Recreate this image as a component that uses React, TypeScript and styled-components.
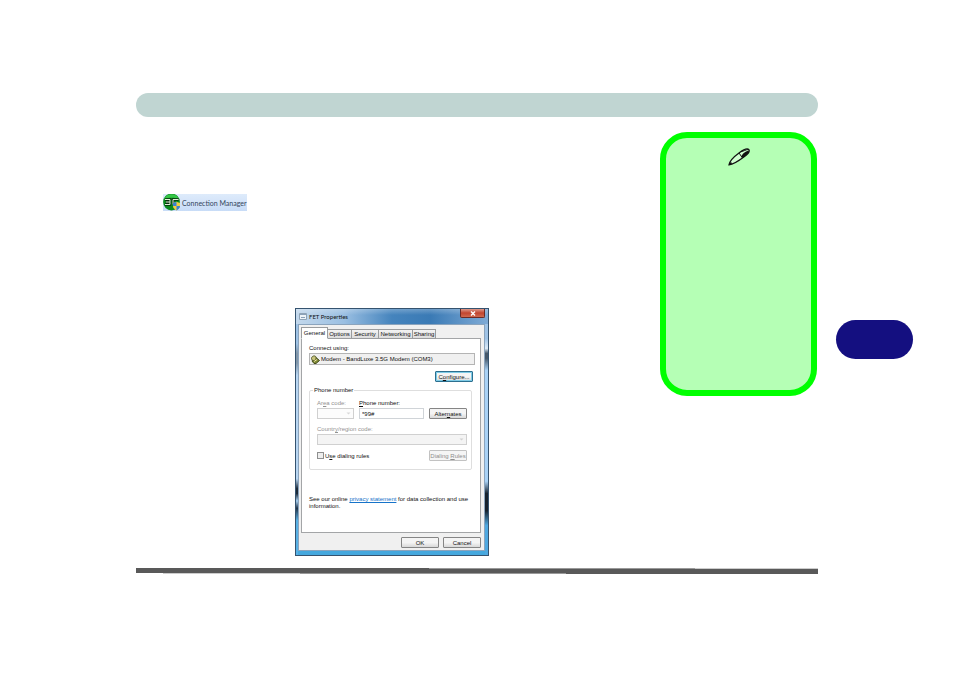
import React from "react";
import styled, { createGlobalStyle, css } from "styled-components";

const Global = createGlobalStyle`
  *, *::before, *::after { box-sizing: border-box; }
  body { margin: 0; background: #fff; font-family: "Liberation Sans", Arial, sans-serif; }
  button, input, select { font: inherit; color: inherit; margin: 0; }
  svg { flex-shrink: 0; }
`;

const Page = styled.div`
  display: grid;
  grid-template-columns: minmax(0, 1fr) 77px;
  column-gap: 18px;
  padding: 93px 41px 0 136px;
`;

const Sheet = styled.main`
  display: flex;
  flex-direction: column;
`;

const HeaderBar = styled.header`
  height: 24px;
  border-radius: 12px;
  background: #c0d5d2;
`;

const Columns = styled.div`
  display: grid;
  grid-template-columns: minmax(0, 1fr) 157px;
  column-gap: 12px;
  align-items: start;
  padding: 15px 1px 0 0;
`;

const Article = styled.section`
  display: flex;
  flex-direction: column;
  padding-top: 62px;
`;

const Shortcut = styled.div`
  display: flex;
  align-items: center;
  gap: 2px;
  align-self: flex-start;
  width: 84px;
  height: 17px;
  margin-left: 27px;
  color: #34455c;
  background: linear-gradient(#deebfb, #c8dcf7);
  font-family: Lato, "Liberation Sans", sans-serif;
  font-size: 7px;
  line-height: 16px;
  white-space: nowrap;
`;

const Note = styled.aside`
  display: flex;
  justify-content: center;
  min-height: 264px;
  padding-top: 10px;
  border: 6px solid #00ff00;
  border-radius: 27px;
  background: #b5ffb5;
`;

const ChapterTab = styled.nav`
  height: 39px;
  margin-top: 227px;
  border-radius: 20px;
  background: #140f80;
`;

const FooterRule = styled.footer`
  height: 6px;
  margin-top: 12px;
  background:
    linear-gradient(90deg, #595959 43%, #999 43% 82%, #ccc 82%) top / 100% 1px no-repeat,
    linear-gradient(90deg, #fff 4%, #ccc 4% 24%, #999 24% 63%, #595959 63%) bottom / 100% 1px no-repeat,
    #595959;
`;

const Dialog = styled.section`
  align-self: center;
  width: 194px;
  margin-top: 97px;
  padding: 0 3px 4px 2px;
  border: 1px solid #35536f;
  color: #111;
  background:
    linear-gradient(#9fc3e6 14%, #8296a8 18% 22%, #b8d6f2 27% 69%, #1d2a38 73% 75%, #a5cdee 78%, #223448 81%, #57b0e4 86%) left / 2px 100% no-repeat,
    linear-gradient(#9fc3e6 12%, #dceaf7 16%, #46586a 18% 20%, #a9d2f6 25% 70%, #17222e 75% 82%, #4fa8e0 88%) right / 3px 100% no-repeat,
    #45a8de;
  font-size: 6px;
  line-height: 8px;
  white-space: nowrap;
`;

const TitleBar = styled.header`
  display: flex;
  align-items: flex-start;
  height: 15px;
  margin: 0 -3px 0 -2px;
  padding: 0 3px 0 2px;
  background:
    linear-gradient(rgba(255, 255, 255, 0.25), rgba(255, 255, 255, 0) 40%),
    linear-gradient(90deg, #c3d8ec, #9abfe2 25%, #4584bd 50%, #3a7ab5 70%, #7fabd6);
`;

const Title = styled.h1`
  flex: 1;
  margin: 0 0 0 2px;
  font-family: Lato, "Liberation Sans", sans-serif;
  font-size: 6px;
  font-weight: 400;
  line-height: 15px;
`;

const CloseButton = styled.button`
  display: flex;
  align-items: center;
  justify-content: center;
  width: 25px;
  height: 9px;
  padding: 0;
  border: 1px solid #6b2a25;
  border-top: 0;
  border-radius: 0 0 2px 2px;
  background: linear-gradient(#dc9a8c, #c2452f 50%, #cf6a50);
`;

const Client = styled.div`
  padding: 2px 3px 2px 2px;
  border: 1px solid #8ba4bd;
  background: #f0f0f0;
`;

const Tabs = styled.div`
  display: flex;
  align-items: flex-end;
  height: 12px;
  margin-bottom: -1px;
`;

const Tab = styled.button<{ $active?: boolean; $width: number }>`
  width: ${(p) => p.$width}px;
  height: ${(p) => (p.$active ? 12 : 10)}px;
  padding: 0;
  border: 1px solid #9a9c9e;
  border-bottom-color: ${(p) => (p.$active ? "#fff" : "#9a9c9e")};
  border-left-width: ${(p) => (p.$active ? 1 : 0)}px;
  background: ${(p) => (p.$active ? "#fff" : "linear-gradient(#f3f3f3, #dcdcdc)")};
  line-height: 8px;
`;

const Panel = styled.div`
  display: flex;
  flex-direction: column;
  min-height: 195px;
  padding: 5px 5px 0 7px;
  border: 1px solid #a3a5a7;
  background: #fff;
`;

const Device = styled.div`
  display: flex;
  align-items: center;
  gap: 1px;
  height: 12px;
  margin-top: 1px;
  border: 1px solid #b4b4b4;
  background: #f0f0f0;
`;

const Button = styled.button<{ $focus?: boolean }>`
  width: 38px;
  height: 11px;
  padding: 0;
  border: 1px solid #858585;
  border-radius: 1px;
  background: linear-gradient(#f4f4f4 50%, #d8d8d8);
  line-height: 8px;
  ${(p) =>
    p.$focus &&
    css`
      border-color: #2c6f8f;
      box-shadow: inset 0 0 0 1px #7fcbe6;
    `}
  &:disabled {
    border-color: #c2c2c2;
    background: #f5f5f5;
    color: #8e8e8e;
  }
`;

const DialogActions = styled.div`
  display: flex;
  justify-content: flex-end;
  gap: 4px;
  margin-top: 4px;
`;

const DeviceActions = styled.div`
  display: flex;
  justify-content: flex-end;
  margin: 6px 2px 0 0;
`;

const Group = styled.fieldset`
  display: grid;
  grid-template-columns: 37px minmax(0, 1fr) 38px;
  column-gap: 5px;
  align-items: end;
  min-width: 0;
  margin: 4px 3px 0 0;
  padding: 5px 4px 8px 7px;
  border: 1px solid #dedede;
  border-radius: 2px;
`;

const Legend = styled.legend`
  margin-left: -4px;
  padding: 0 1px;
`;

const Field = styled.label<{ $wide?: boolean; $muted?: boolean }>`
  display: flex;
  flex-direction: column;
  gap: 1px;
  color: ${(p) => (p.$muted ? "#929292" : "inherit")};
  ${(p) => p.$wide && "grid-column: 1 / -1; margin-top: 6px;"}
`;

const TextInput = styled.input`
  width: 100%;
  height: 11px;
  padding: 0 2px;
  border: 1px solid #d0d4d8;
  background: #fff;
`;

const SelectShell = styled.span`
  display: grid;
  align-items: center;
  & > * { grid-area: 1 / 1; }
  & > svg { justify-self: end; margin-right: 3px; }
`;

const Select = styled.select<{ $plain?: boolean }>`
  width: 100%;
  height: 11px;
  padding: 0 2px;
  border: 1px solid #bdbdbd;
  border-radius: 0;
  background: ${(p) => (p.$plain ? "#fbfbfb" : "#f0f0f0")};
  appearance: none;
`;

const RulesRow = styled.div`
  display: flex;
  grid-column: 1 / -1;
  align-items: center;
  justify-content: space-between;
  margin-top: 5px;
`;

const CheckLabel = styled.label`
  display: flex;
  align-items: center;
  gap: 1px;
`;

const Check = styled.input`
  width: 7px;
  height: 7px;
  border: 1px solid #8e8f8f;
  background: #eee;
  appearance: none;
`;

const Privacy = styled.p`
  margin: 26px 0 0;
  line-height: 7px;
  white-space: normal;
`;

const Link = styled.a`
  color: #1673c9;
`;

const Arrow = () => (
  <svg width="5" height="3" viewBox="0 0 5 3" aria-hidden="true">
    <path d="M.5 .5h4L2.500 2.500z" fill="#888" />
  </svg>
);

const ManagerIcon = () => (
  <svg width="17" height="17" viewBox="0 0 17 17" aria-hidden="true">
    <circle cx="8.500" cy="8" r="8.400" fill="#0a8a1c" />
    <path d="M1 5.500a8 8 0 0 1 15 0c-3-2.500-12-2.500-15 0z" fill="#35c546" />
    <path d="M2 5.500h5v5H2M3 8h4M15.500 5.500H10v5" fill="none" stroke="#072d0b" strokeWidth="2.400" />
    <path d="M2 5.500h5v5H2M3 8h4M15.500 5.500H10v5" fill="none" stroke="#e0f0d8" />
    <path d="M10 9l3.500-1.200L17 9v3c0 2-1.500 3.300-3.500 4.500C11.500 15.300 10 14 10 12z" fill="#f1ce42" />
    <path d="M10 9l3.500-1.200V12H10zM13.500 12H17c0 2-1.500 3.300-3.500 4.500z" fill="#3c82cf" />
  </svg>
);

const PenIcon = () => (
  <svg width="22" height="18" viewBox="0 0 22 18" aria-hidden="true">
    <path d="M1 16.800C1.500 14 5.500 9 11 5 15 2 19 0 20.800 1.500c1 1.500-.8 4.500-4.300 7C11.500 12.300 5 16.500 1 16.800z" fill="#d0ffd0" stroke="#111" strokeWidth="1.300" />
    <path d="M1 16.800l2-3 1 2z" fill="#111" />
    <path d="M11 5l3.500 5M13 3.700C15 3.500 18 1.500 20.500 1.500" fill="none" stroke="#111" />
    <path d="M13.500 8.500C14 6 17 3.500 20.800 2.500c.5 2-1.500 4.200-4.500 6.200-1.200.8-2.500 1-2.800-.2z" fill="#111" />
  </svg>
);

const WindowIcon = () => (
  <svg width="9" height="15" viewBox="0 0 9 15" aria-hidden="true">
    <path d="M1.500 4.500h7v6h-7z" fill="#edf3f8" stroke="#8fa3b6" />
    <path d="M2 5.500h6M3 8.500h4" stroke="#8ba1b8" />
  </svg>
);

const ModemIcon = () => (
  <svg width="10" height="9" viewBox="0 0 10 9" aria-hidden="true">
    <path d="M2 6l4-3.500L9.500 5.500 6 8.500H4z" fill="#7f8a34" stroke="#454c20" />
    <path d="M1.500 3.500c0-2.500 3.500-3.500 4.500-1.500v3L2.500 6z" fill="#c9c57c" stroke="#545a28" />
    <path d="M4 6.500l3-2" stroke="#efe7a4" />
  </svg>
);

const CloseIcon = () => (
  <svg width="6" height="5" viewBox="0 0 6 5" aria-hidden="true">
    <path d="M1 .5l4 4M5 .5l-4 4" stroke="#fff" strokeWidth="1.400" />
  </svg>
);

const tabs = [
  { name: "General", width: 27 },
  { name: "Options", width: 24 },
  { name: "Security", width: 27 },
  { name: "Networking", width: 34 },
  { name: "Sharing", width: 23 },
];

function PropertiesDialog() {
  return (
    <Dialog aria-label="FET Properties">
      <TitleBar>
        <WindowIcon />
        <Title>FET Properties</Title>
        <CloseButton aria-label="Close"><CloseIcon /></CloseButton>
      </TitleBar>
      <Client>
        <Tabs role="tablist">
          {tabs.map((t, i) => (
            <Tab key={t.name} role="tab" aria-selected={i === 0} $active={i === 0} $width={t.width}>{t.name}</Tab>
          ))}
        </Tabs>
        <Panel role="tabpanel">
          <span>Connect using:</span>
          <Device><ModemIcon />Modem - BandLuxe 3.5G Modem (COM3)</Device>
          <DeviceActions><Button $focus>C<u>o</u>nfigure...</Button></DeviceActions>
          <Group>
            <Legend>Phone number</Legend>
            <Field $muted>
              <span>Ar<u>e</u>a code:</span>
              <SelectShell><Select $plain disabled aria-label="Area code" /><Arrow /></SelectShell>
            </Field>
            <Field>
              <span><u>P</u>hone number:</span>
              <TextInput defaultValue="*99#" />
            </Field>
            <Button>Alter<u>n</u>ates</Button>
            <Field $wide $muted>
              <span>Countr<u>y</u>/region code:</span>
              <SelectShell><Select disabled aria-label="Country/region code" /><Arrow /></SelectShell>
            </Field>
            <RulesRow>
              <CheckLabel><Check type="checkbox" /><span>U<u>s</u>e dialing rules</span></CheckLabel>
              <Button disabled>Dialing <u>R</u>ules</Button>
            </RulesRow>
          </Group>
          <Privacy>See our online <Link href="#privacy">privacy statement</Link> for data collection and use information.</Privacy>
        </Panel>
        <DialogActions><Button>OK</Button><Button>Cancel</Button></DialogActions>
      </Client>
    </Dialog>
  );
}

export default function App() {
  return (
    <>
      <Global />
      <Page>
        <Sheet>
          <HeaderBar />
          <Columns>
            <Article>
              <Shortcut><ManagerIcon />Connection Manager</Shortcut>
              <PropertiesDialog />
            </Article>
            <Note><PenIcon /></Note>
          </Columns>
          <FooterRule />
        </Sheet>
        <ChapterTab aria-label="Chapter" />
      </Page>
    </>
  );
}
